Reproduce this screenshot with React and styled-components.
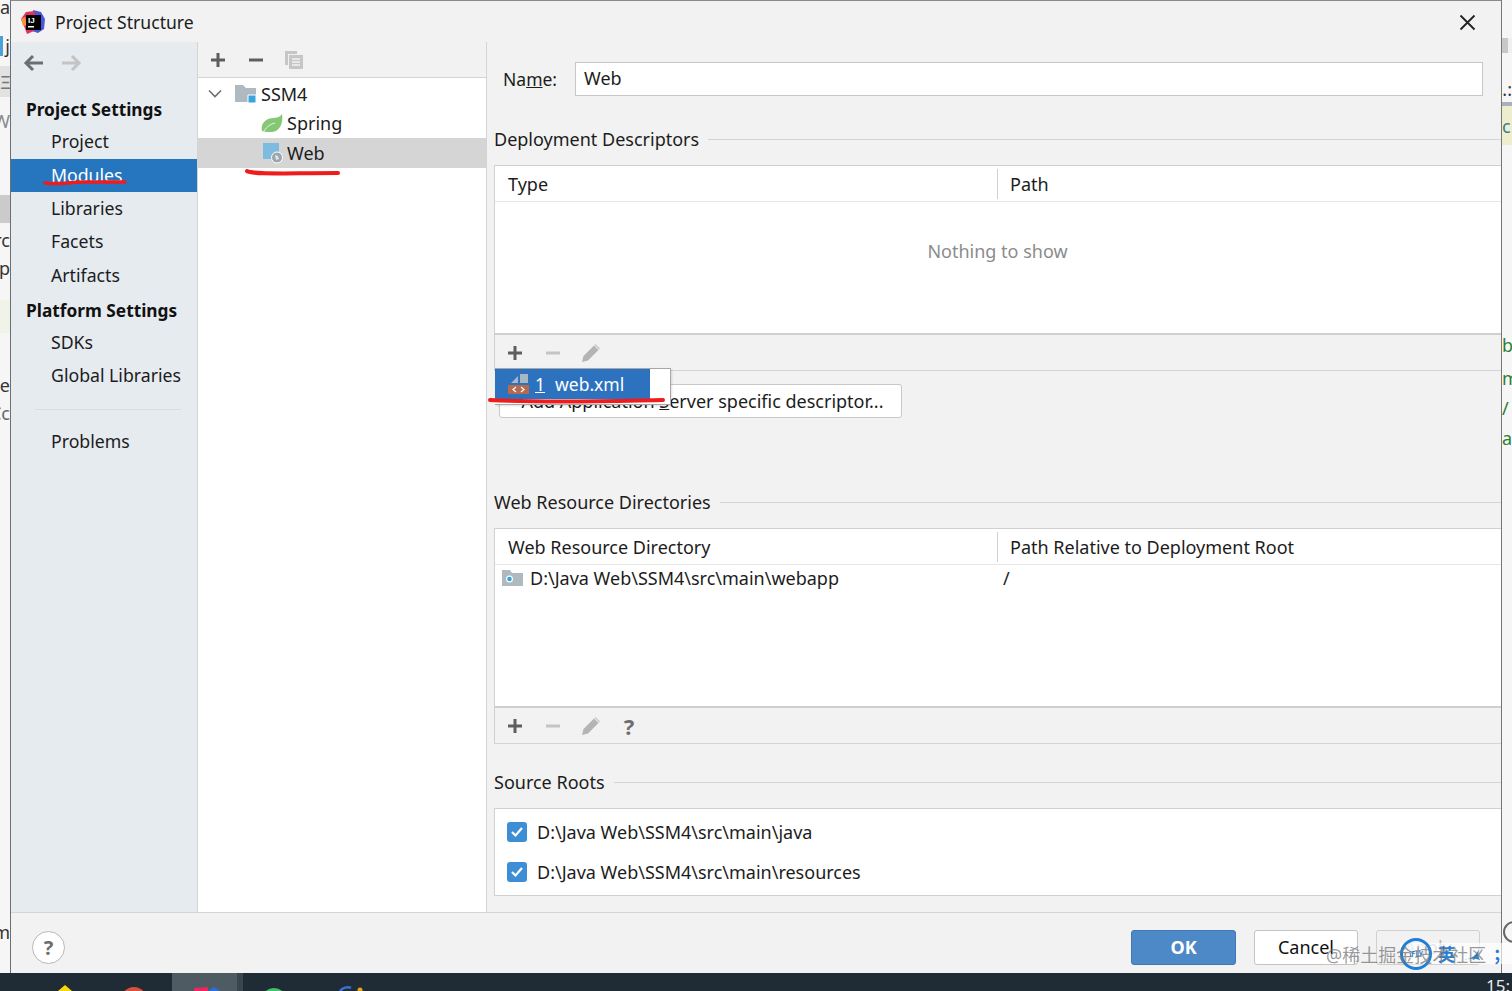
import React from "react";
import styled, { createGlobalStyle } from "styled-components";

const GlobalStyle = createGlobalStyle`
    html, body {
        margin: 0;
        padding: 0;
        background: #f2f2f2;
    }
    * {
        box-sizing: border-box;
    }
`;

const Page = styled.div`
    position: relative;
    width: 1512px;
    height: 991px;
    overflow: hidden;
    display: flex;
    flex-direction: column;
    font-family: "Noto Sans", "Noto Sans CJK SC", sans-serif;
    font-size: 18px;
    color: #1c1c1c;
`;

const Desk = styled.div`
    display: flex;
    height: 973px;
`;

const Strip = styled.div`
    width: 10px;
    flex: none;
    display: flex;
    flex-direction: column;
    overflow: hidden;
    background: #f6f6f6;
`;

const StripRow = styled.div`
    height: ${(p) => p.$h}px;
    flex: none;
    display: flex;
    align-items: center;
    justify-content: ${(p) => (p.$end ? "flex-end" : "flex-start")};
    background: ${(p) => p.$bg || "transparent"};
    color: ${(p) => p.$color || "#333"};
    font-size: 18px;
    line-height: 1;
    white-space: nowrap;
`;

const Dialog = styled.div`
    flex: 1;
    min-width: 0;
    display: flex;
    flex-direction: column;
    background: #f2f2f2;
    border-left: 1px solid #6e6e6e;
    border-right: 1px solid #777;
    border-top: 1px solid #8a8a8a;
`;

const TitleBar = styled.div`
    height: 41px;
    flex: none;
    display: flex;
    align-items: center;
    padding: 1px 25px 0 10px;
    gap: 10px;
    font-size: 17.6px;
`;

const TitleText = styled.span`
    flex: 1;
`;

const Body = styled.div`
    flex: 1;
    min-height: 0;
    display: flex;
`;

const Sidebar = styled.div`
    width: 187px;
    flex: none;
    background: #e6ebf0;
    border-right: 1px solid #d4d4d4;
    display: flex;
    flex-direction: column;
`;

const NavArrows = styled.div`
    height: 41px;
    display: flex;
    align-items: center;
    gap: 19px;
    padding-left: 12px;
`;

const NavHeading = styled.div`
    height: 31px;
    line-height: 31px;
    margin-top: ${(p) => p.$top || 0}px;
    padding-left: 15px;
    font-weight: 700;
    font-size: 17.3px;
    color: #111;
`;

const NavItem = styled.div`
    height: ${(p) => (p.$active ? 33 : 33.5)}px;
    line-height: ${(p) => (p.$active ? 32 : 33.5)}px;
    padding-left: 40px;
    font-size: 17.7px;
    background: ${(p) => (p.$active ? "#2675bf" : "transparent")};
    color: ${(p) => (p.$active ? "#fff" : "#1c1c1c")};
`;

const NavSpacer = styled.div`
    height: ${(p) => p.$h}px;
`;

const NavDivider = styled.div`
    height: 1px;
    margin: 16px 16px 15px 24px;
    background: #d8dde2;
`;

const TreePane = styled.div`
    width: 289px;
    flex: none;
    display: flex;
    flex-direction: column;
    background: #fff;
    border-right: 1px solid #d4d4d4;
`;

const TreeBar = styled.div`
    height: 36px;
    flex: none;
    display: flex;
    align-items: center;
    gap: 18px;
    padding-left: 10px;
    background: #f2f2f2;
    border-bottom: 1px solid #d4d4d4;
`;

const TreeRow = styled.div`
    height: 29.5px;
    display: flex;
    align-items: center;
    padding-left: ${(p) => p.$indent}px;
    gap: 4px;
    background: ${(p) => (p.$active ? "#d5d5d5" : "transparent")};
`;

const TreeToggle = styled.span`
    width: 23px;
    flex: none;
    display: flex;
`;

const Detail = styled.div`
    flex: 1;
    min-width: 0;
    padding: 20px 0 0 7px;
    display: flex;
    flex-direction: column;
`;

const NameRow = styled.div`
    height: 34px;
    flex: none;
    display: flex;
    align-items: center;
    padding-left: 9px;
`;

const NameLabel = styled.span`
    width: 72px;
    flex: none;
    margin-top: -1px;
    font-size: 17.5px;
`;

const Hotkey = styled.span`
    text-decoration: underline;
    margin-right: ${(p) => p.$gap || 0}px;
`;

const NameInput = styled.div`
    width: 908px;
    height: 34px;
    line-height: 31px;
    padding-left: 8px;
    background: #fff;
    border: 1px solid #c6c6c6;
`;

const SectionTitle = styled.div`
    height: 24px;
    flex: none;
    margin-top: ${(p) => p.$top}px;
    margin-bottom: 14px;
    display: flex;
    align-items: center;
    gap: 9px;
    &::after {
        content: "";
        flex: 1;
        height: 1px;
        background: #d4d4d4;
    }
`;

const Table = styled.div`
    height: ${(p) => p.$h}px;
    flex: none;
    display: flex;
    flex-direction: column;
    background: #fff;
    border: 1px solid #d0d0d0;
    border-right: none;
    border-bottom: 2px solid #cfcfcf;
`;

const TableHead = styled.div`
    height: 36px;
    flex: none;
    display: flex;
    align-items: center;
    border-bottom: 1px solid #e6e6e6;
`;

const HeadCell = styled.div`
    width: ${(p) => (p.$first ? "503px" : "auto")};
    flex: ${(p) => (p.$first ? "none" : "1")};
    height: 30px;
    line-height: 30px;
    padding-left: ${(p) => (p.$first ? 13 : 12)}px;
    border-right: ${(p) => (p.$first ? "1px solid #d0d0d0" : "none")};
`;

const EmptyNote = styled.div`
    flex: 1;
    padding: 37px 1px 0 0;
    text-align: center;
    color: #8c8c8c;
`;

const DirRow = styled.div`
    height: 26px;
    display: flex;
    align-items: center;
`;

const DirCell = styled.div`
    width: 502px;
    flex: none;
    display: flex;
    align-items: center;
    gap: 7px;
    padding-left: 7px;
`;

const DirPath = styled.span`
    margin-left: 6px;
`;

const ToolWrap = styled.div`
    position: relative;
    flex: none;
`;

const Tools = styled.div`
    height: 36px;
    display: flex;
    align-items: center;
    gap: 18px;
    padding-left: 10px;
    border-left: 1px solid #d0d0d0;
    border-bottom: 1px solid #d4d4d4;
`;

const ToolHelp = styled.span`
    width: 20px;
    text-align: center;
    font-size: 22px;
    font-weight: 700;
    color: #6e6e6e;
    line-height: 1;
`;

const PopupMenu = styled.div`
    position: absolute;
    left: 1px;
    top: 33px;
    z-index: 3;
    width: 176px;
    height: 37px;
    background: #fff;
    border: 1px solid #a8a8a8;
    border-left: none;
    box-shadow: 1px 1px 2px rgba(0, 0, 0, 0.12);
`;

const PopupItem = styled.div`
    width: 155px;
    height: 30px;
    display: flex;
    align-items: center;
    gap: 5px;
    padding-left: 13px;
    font-size: 17.5px;
    background: #2d72bf;
    color: #fff;
`;

const WideButton = styled.div`
    width: 403px;
    height: 34px;
    margin: 13px 0 0 5px;
    flex: none;
    display: flex;
    align-items: center;
    justify-content: center;
    padding-left: 4px;
    background: #fff;
    border: 1px solid #c8c8c8;
    border-radius: 3px;
    white-space: pre;
`;

const RootsBox = styled.div`
    height: 88px;
    flex: none;
    padding: 3px 0 0 12px;
    background: #fff;
    border: 1px solid #d0d0d0;
    border-right: none;
`;

const RootRow = styled.div`
    height: 40px;
    display: flex;
    align-items: center;
    gap: 10px;
`;

const CheckMark = styled.span`
    width: 20px;
    height: 20px;
    flex: none;
    display: flex;
    align-items: center;
    justify-content: center;
    border-radius: 3px;
    background: #3e8ed6;
`;

const Footer = styled.div`
    height: 61px;
    flex: none;
    display: flex;
    align-items: center;
    padding: 8px 21px 0 21px;
    border-top: 1px solid #d4d4d4;
`;

const HelpButton = styled.div`
    width: 33px;
    height: 33px;
    display: flex;
    align-items: center;
    justify-content: center;
    border: 1px solid #b8b8b8;
    border-radius: 50%;
    background: #fff;
    font-size: 20px;
    font-weight: 700;
    color: #6e6e6e;
`;

const FooterActions = styled.div`
    margin-left: auto;
    display: flex;
    gap: 18px;
`;

const ActionButton = styled.div`
    width: ${(p) => p.$w}px;
    height: 35px;
    display: flex;
    align-items: center;
    justify-content: center;
    border-radius: 3px;
    border: 1px solid ${(p) => (p.$primary ? "#3f78b5" : p.$off ? "#d0d0d0" : "#c4c4c4")};
    background: ${(p) => (p.$primary ? "#4d88c7" : p.$off ? "#f2f2f2" : "#fff")};
    color: ${(p) => (p.$primary ? "#fff" : p.$off ? "#b5b5b5" : "#111")};
    font-weight: ${(p) => (p.$primary ? 700 : 400)};
`;

const Taskbar = styled.div`
    height: 18px;
    flex: none;
    display: flex;
    align-items: flex-start;
    overflow: hidden;
    background: #1f2b35;
    color: #e8e8e8;
`;

const TaskSlot = styled.div`
    width: ${(p) => p.$w}px;
    height: 18px;
    flex: none;
    display: flex;
    justify-content: center;
    background: ${(p) => p.$bg || "transparent"};
`;

const Clock = styled.span`
    margin-left: auto;
    width: 26px;
    font-size: 17px;
    line-height: 26px;
    white-space: nowrap;
    overflow: hidden;
`;

const Marks = styled.svg`
    position: absolute;
    left: 0;
    top: 0;
    z-index: 5;
    pointer-events: none;
`;

const Watermark = styled.div`
    position: absolute;
    left: 1326px;
    top: 944px;
    z-index: 8;
    font-size: 18px;
    line-height: 22px;
    color: rgba(120, 120, 120, 0.75);
    white-space: nowrap;
`;

const ImeBar = styled.div`
    position: absolute;
    left: 1400px;
    top: 943px;
    z-index: 7;
    width: 112px;
    height: 21px;
    display: flex;
    align-items: center;
    background: rgba(255, 255, 255, 0.65);
    color: #1f7ed8;
    font-family: "Noto Sans CJK SC", sans-serif;
    font-size: 17px;
    font-weight: 700;
`;

const ImeRing = styled.div`
    width: 32px;
    height: 32px;
    flex: none;
    margin-right: 6px;
    border: 3px solid #1f7ed8;
    border-radius: 50%;
    display: flex;
    align-items: center;
    justify-content: center;
    font-size: 7px;
    background: rgba(255, 255, 255, 0.35);
`;

const ImePunct = styled.span`
    margin-left: 6px;
`;

const Plus = ({ color = "#5e5e5e" }) => (
    <svg width="20" height="20" viewBox="0 0 20 20">
        <path d="M10 3v14M3 10h14" stroke={color} strokeWidth="3" />
    </svg>
);

const Minus = ({ color = "#5e5e5e" }) => (
    <svg width="20" height="20" viewBox="0 0 20 20">
        <path d="M3 10h14" stroke={color} strokeWidth="3" />
    </svg>
);

const Pencil = () => (
    <svg width="20" height="20" viewBox="0 0 20 20">
        <path d="M1 19l1.500-6L13 2.500l4.500 4.500L7 17.500z" fill="#b4b4b4" />
        <path d="M14.500 1l4.500 4.500-1 1L13.500 2z" fill="#c8c8c8" />
    </svg>
);

const ArrowLeft = ({ color }) => (
    <svg width="20" height="18" viewBox="0 0 20 18">
        <path d="M20 9H3M10 2L3 9l7 7" fill="none" stroke={color} strokeWidth="3" />
    </svg>
);

const ArrowRight = ({ color }) => (
    <svg width="20" height="18" viewBox="0 0 20 18">
        <path d="M0 9h17M10 2l7 7-7 7" fill="none" stroke={color} strokeWidth="3" />
    </svg>
);

const CopyIcon = () => (
    <svg width="20" height="20" viewBox="0 0 20 20">
        <path d="M1 1h12v3H4v11H1z" fill="#c6c6c6" />
        <path d="M5 5h14v14H5z" fill="#c6c6c6" />
        <path d="M8 9h8M8 12h8M8 15h8" stroke="#f2f2f2" strokeWidth="1.300" />
    </svg>
);

const Chevron = () => (
    <svg width="14" height="10" viewBox="0 0 14 10">
        <path d="M1 1.500l6 6 6-6" fill="none" stroke="#6e6e6e" strokeWidth="1.600" />
    </svg>
);

const ModuleFolder = () => (
    <svg width="22" height="22" viewBox="0 0 22 22">
        <path d="M0 2h8l3 3h10v14H0z" fill="#aeb9c0" />
        <path d="M13 12h8v8h-8z" fill="#3aa4dc" stroke="#fff" />
    </svg>
);

const SpringLeaf = () => (
    <svg width="22" height="20" viewBox="0 0 22 20">
        <path d="M21 1c1.500 9-2 18-11 18-3 0-6 0-9-1C-1 10 6 5 12 5c3.500 0 7-1 9-4z" fill="#86c775" />
        <path d="M3 18c3-5 7-7 11-8" stroke="#e9f5e5" strokeWidth="1" fill="none" />
    </svg>
);

const WebModule = () => (
    <svg width="20" height="22" viewBox="0 0 20 22">
        <path d="M0 1h16v16H0z" fill="#7dbce0" />
        <circle cx="14" cy="15.500" r="5.500" fill="#9aa5ad" stroke="#fff" />
        <path d="M12 13l3 1 1 3-3 1z" fill="#dfe4e8" />
    </svg>
);

const WebrootFolder = () => (
    <svg width="21" height="16" viewBox="0 0 21 16">
        <path d="M0 0h8l2 3h11v13H0z" fill="#aeb9c0" />
        <circle cx="7.500" cy="9" r="3.500" fill="#fff" />
        <circle cx="7.500" cy="9" r="2.300" fill="#2ea3e0" />
    </svg>
);

const XmlIcon = () => (
    <svg width="22" height="22" viewBox="0 0 22 22">
        <path d="M3 10l7-7v7zM12 1h8v9h-8z" fill="#a9b6c4" />
        <path d="M0 12h21v9H0z" fill="#b5694e" />
        <path d="M8 14l-3 2.500 3 2.500M13 14l3 2.500-3 2.500" fill="none" stroke="#fff" strokeWidth="1.200" />
    </svg>
);

const Check = () => (
    <svg width="14" height="14" viewBox="0 0 14 14">
        <path d="M2 7l3.500 3.500L12 3" fill="none" stroke="#fff" strokeWidth="2.200" />
    </svg>
);

const CloseIcon = () => (
    <svg width="17" height="17" viewBox="0 0 17 17">
        <path d="M1.500 1.500l14 14M15.500 1.500l-14 14" stroke="#222" strokeWidth="1.800" />
    </svg>
);

const AppLogo = () => (
    <svg width="24" height="24" viewBox="0 0 24 24">
        <path d="M12 0l8 2 4 7-1 10-6 4-6-2z" fill="#4a55d9" />
        <path d="M0 9l5-7 9-1-1 20-7 3-3-8z" fill="#e0315f" />
        <path d="M0 9l4-2 2 8-4 1z" fill="#f7933a" />
        <rect x="5" y="5" width="15" height="15" fill="#000" />
        <text x="7" y="13" fontSize="8" fontWeight="700" fill="#fff" fontFamily="Liberation Sans, sans-serif">IJ</text>
        <rect x="7" y="16" width="6" height="1.500" fill="#fff" />
    </svg>
);

const navTop = ["Project", "Modules", "Libraries", "Facets", "Artifacts"];
const navPlatform = ["SDKs", "Global Libraries"];

const AppSidebar = () => (
    <Sidebar>
        <NavArrows>
            <ArrowLeft color="#6e6e6e" />
            <ArrowRight color="#c4c4c4" />
        </NavArrows>
        <NavSpacer $h={11} />
        <NavHeading>Project Settings</NavHeading>
        {navTop.map((item) => (
            <NavItem key={item} $active={item === "Modules"}>{item}</NavItem>
        ))}
        <NavHeading $top={2.5}>Platform Settings</NavHeading>
        {navPlatform.map((item) => (
            <NavItem key={item}>{item}</NavItem>
        ))}
        <NavDivider />
        <NavItem>Problems</NavItem>
    </Sidebar>
);

const ModuleTree = () => (
    <TreePane>
        <TreeBar>
            <Plus />
            <Minus />
            <CopyIcon />
        </TreeBar>
        <NavSpacer $h={1} />
        <TreeRow $indent={10}>
            <TreeToggle><Chevron /></TreeToggle>
            <ModuleFolder />
            SSM4
        </TreeRow>
        <TreeRow $indent={63}><SpringLeaf />Spring</TreeRow>
        <TreeRow $indent={65} $active><WebModule />Web</TreeRow>
    </TreePane>
);

const App = () => {
    return (
        <Page>
            <GlobalStyle />
            <Desk>
                <Strip>
                    <StripRow $h={14} $end>a</StripRow>
                    <StripRow $h={22} />
                    <StripRow $h={20} $end $bg="linear-gradient(90deg, #4aa3d8 3px, transparent 3px)">j</StripRow>
                    <StripRow $h={10} />
                    <StripRow $h={31} $bg="#e2e2e2" $color="#777">Ξ</StripRow>
                    <StripRow $h={12} />
                    <StripRow $h={24} $end $color="#888">W</StripRow>
                    <StripRow $h={62} />
                    <StripRow $h={28} $bg="#cbcbcb" />
                    <StripRow $h={5} />
                    <StripRow $h={24} $end>rc</StripRow>
                    <StripRow $h={4} />
                    <StripRow $h={24} $end>p</StripRow>
                    <StripRow $h={20} />
                    <StripRow $h={33} $bg="#eff3e8" />
                    <StripRow $h={40} />
                    <StripRow $h={24} $end>e</StripRow>
                    <StripRow $h={4} />
                    <StripRow $h={24} $end $color="#666">Cc</StripRow>
                    <StripRow $h={495} />
                    <StripRow $h={24} $end>m</StripRow>
                </Strip>
                <Dialog>
                    <TitleBar>
                        <AppLogo />
                        <TitleText>Project Structure</TitleText>
                        <CloseIcon />
                    </TitleBar>
                    <Body>
                        <AppSidebar />
                        <ModuleTree />
                        <Detail>
                            <NameRow>
                                <NameLabel>Na<Hotkey>m</Hotkey>e:</NameLabel>
                                <NameInput>Web</NameInput>
                            </NameRow>
                            <SectionTitle $top={31}>Deployment Descriptors</SectionTitle>
                            <Table $h={170}>
                                <TableHead>
                                    <HeadCell $first>Type</HeadCell>
                                    <HeadCell>Path</HeadCell>
                                </TableHead>
                                <EmptyNote>Nothing to show</EmptyNote>
                            </Table>
                            <ToolWrap>
                                <Tools>
                                    <Plus />
                                    <Minus color="#c4c4c4" />
                                    <Pencil />
                                </Tools>
                                <PopupMenu>
                                    <PopupItem>
                                        <XmlIcon />
                                        <span><Hotkey $gap={10}>1</Hotkey>web.xml</span>
                                    </PopupItem>
                                </PopupMenu>
                            </ToolWrap>
                            <WideButton>Add Application <Hotkey>S</Hotkey>erver specific descriptor...</WideButton>
                            <SectionTitle $top={72}>Web Resource Directories</SectionTitle>
                            <Table $h={180}>
                                <TableHead>
                                    <HeadCell $first>Web Resource Directory</HeadCell>
                                    <HeadCell>Path Relative to Deployment Root</HeadCell>
                                </TableHead>
                                <DirRow>
                                    <DirCell><WebrootFolder />D:\Java Web\SSM4\src\main\webapp</DirCell>
                                    <DirPath>/</DirPath>
                                </DirRow>
                            </Table>
                            <ToolWrap>
                                <Tools>
                                    <Plus />
                                    <Minus color="#c4c4c4" />
                                    <Pencil />
                                    <ToolHelp>?</ToolHelp>
                                </Tools>
                            </ToolWrap>
                            <SectionTitle $top={26}>Source Roots</SectionTitle>
                            <RootsBox>
                                <RootRow><CheckMark><Check /></CheckMark>D:\Java Web\SSM4\src\main\java</RootRow>
                                <RootRow><CheckMark><Check /></CheckMark>D:\Java Web\SSM4\src\main\resources</RootRow>
                            </RootsBox>
                        </Detail>
                    </Body>
                    <Footer>
                        <HelpButton>?</HelpButton>
                        <FooterActions>
                            <ActionButton $w={105} $primary>OK</ActionButton>
                            <ActionButton $w={104}>Cancel</ActionButton>
                            <ActionButton $w={104} $off>Apply</ActionButton>
                        </FooterActions>
                    </Footer>
                </Dialog>
                <Strip>
                    <StripRow $h={38} />
                    <StripRow $h={15} $bg="linear-gradient(90deg, #c8c8c8 60%, #f0f0f0 60%)" />
                    <StripRow $h={23} />
                    <StripRow $h={26} $end>n.:</StripRow>
                    <StripRow $h={4} $bg="#aab0bd" />
                    <StripRow $h={39} $bg="#eeeecf" $color="#3b7a94">c</StripRow>
                    <StripRow $h={188} />
                    <StripRow $h={24} $color="#2e7d32">b</StripRow>
                    <StripRow $h={9} />
                    <StripRow $h={24} $color="#2e7d32">m</StripRow>
                    <StripRow $h={6} />
                    <StripRow $h={24} $color="#2e7d32">/</StripRow>
                    <StripRow $h={6} />
                    <StripRow $h={24} $color="#2e7d32">a</StripRow>
                    <StripRow $h={470} />
                    <StripRow $h={25}>
                        <svg width="10" height="25" viewBox="0 0 10 25"><circle cx="12" cy="12" r="10" fill="none" stroke="#666" strokeWidth="2" /></svg>
                    </StripRow>
                </Strip>
            </Desk>
            <Taskbar>
                <TaskSlot $w={35} />
                <TaskSlot $w={60}>
                    <svg width="26" height="18" viewBox="0 0 26 18"><path d="M13 12l7 6H6z" fill="#f5d90a" /></svg>
                </TaskSlot>
                <TaskSlot $w={77}>
                    <svg width="26" height="18" viewBox="0 0 26 18"><circle cx="13" cy="27" r="13" fill="#d84f3e" /></svg>
                </TaskSlot>
                <TaskSlot $w={65} $bg="#4f5b63">
                    <svg width="30" height="18" viewBox="0 0 30 18"><path d="M4 15l14-1v4H4z" fill="#f0255f" /><path d="M24 14l6 4H18z" fill="#2b6fe0" /></svg>
                </TaskSlot>
                <TaskSlot $w={6} $bg="#3a454d" />
                <TaskSlot $w={62}>
                    <svg width="30" height="18" viewBox="0 0 30 18"><circle cx="15" cy="28" r="13" fill="#3fc46a" /></svg>
                </TaskSlot>
                <TaskSlot $w={88}>
                    <svg width="30" height="18" viewBox="0 0 30 18"><path d="M6 18c2-3 8-5 11-3" stroke="#3a6fd8" strokeWidth="2.500" fill="none" /><circle cx="26" cy="17" r="2.500" fill="#e8a317" /></svg>
                </TaskSlot>
                <Clock>15:</Clock>
            </Taskbar>
            <Marks width="1512" height="991" viewBox="0 0 1512 991">
                <path d="M45 183c14 2 24-1 40-1 13 0 28 0 40 0" fill="none" stroke="#ee1c1c" strokeWidth="3.500" strokeLinecap="round" />
                <path d="M247 171c6 4 40 2 91 2" fill="none" stroke="#ee1c1c" strokeWidth="4" strokeLinecap="round" />
                <path d="M490 400c60 3 120 1 173 0" fill="none" stroke="#ee1c1c" strokeWidth="4" strokeLinecap="round" />
            </Marks>
            <ImeBar>
                <ImeRing>iFLY</ImeRing>
                英
                <svg width="24" height="14" viewBox="0 0 24 14" style={{ marginLeft: 8 }}><path d="M1 12c6 1 12-3 15-10-1 5-1 8 1 11-5-2-10-1-16-1z" fill="#1f7ed8" /></svg>
                <ImePunct>；</ImePunct>
            </ImeBar>
            <Watermark>@稀土掘金技术社区</Watermark>
        </Page>
    );
};

export default App;
